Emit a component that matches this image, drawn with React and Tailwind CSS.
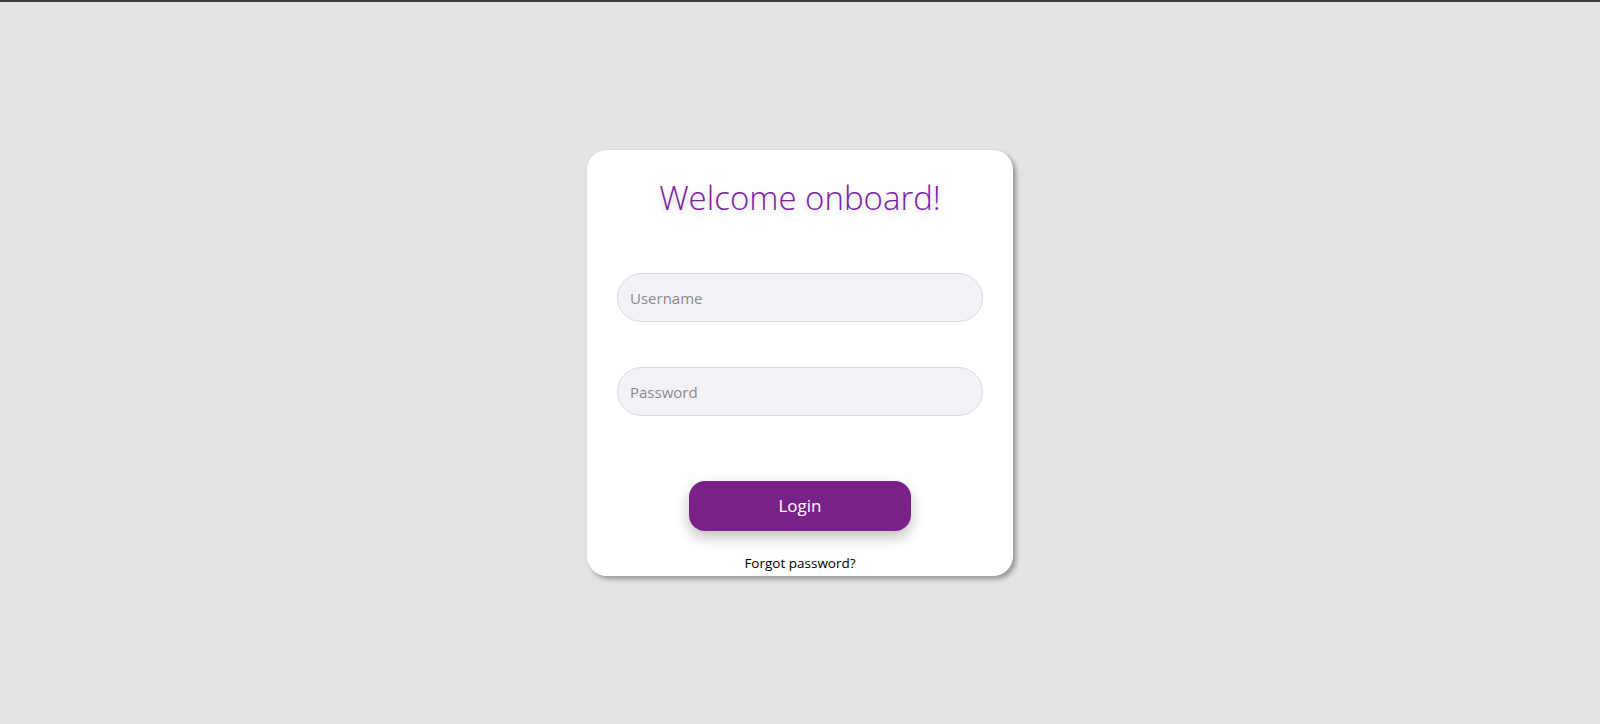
export default function App() {
  return (
    <main className="h-screen w-full bg-[#e4e4e4] border-t-2 border-[#3c3c3c] flex items-center justify-center font-['Open_Sans',sans-serif]">
      {/* Card */}
      <div className="w-[426px] h-[426px] bg-white rounded-[20px] shadow-[3px_3px_5px_rgba(0,0,0,0.35)] flex flex-col items-center px-[30px]">
        <h1 className="mt-[26px] h-[44px] leading-[44px] text-[33px] font-light text-[#7b1fa2] [text-shadow:0_3px_6px_rgba(0,0,0,0.2)]">
          Welcome onboard!
        </h1>

        <input
          type="text"
          placeholder="Username"
          className="mt-[53px] w-[366px] h-[49px] rounded-full bg-[#f3f2f7] border border-[#d9d8e0] px-[12px] text-[15px] text-gray-700 placeholder:text-[#8a8a8a] outline-none"
        />
        <input
          type="password"
          placeholder="Password"
          className="mt-[45px] w-[366px] h-[49px] rounded-full bg-[#f3f2f7] border border-[#d9d8e0] px-[12px] text-[15px] text-gray-700 placeholder:text-[#8a8a8a] outline-none"
        />

        <button className="mt-[65px] w-[222px] h-[50px] rounded-[16px] bg-[#7a2089] text-white text-[17px] shadow-[0_6px_14px_rgba(0,0,0,0.25)]">
          Login
        </button>

        <a href="#" className="mt-[23px] text-[13.5px] text-black leading-[18px]">
          Forgot password?
        </a>
      </div>
    </main>
  );
}
